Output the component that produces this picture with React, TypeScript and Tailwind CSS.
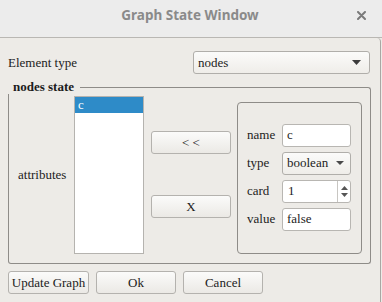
import React from 'react';

const serif = { fontFamily: '"Liberation Serif", "Times New Roman", serif' };

const Btn = ({ label, w }: { label: string; w: string }) => (
  <button
    className={`${w} h-[23px] rounded-[3px] border border-[#b4b2ae] bg-gradient-to-b from-[#fbfbfa] to-[#ebe9e5] text-[13px] text-[#1c1c1c] leading-none`}
  >
    {label}
  </button>
);

const Arrow = ({ small }: { small?: boolean }) =>
  small ? (
    <svg width="8" height="4" viewBox="0 0 8 4">
      <polygon points="0,0 8,0 4,4" fill="#4a4a4a" />
    </svg>
  ) : (
    <svg width="9" height="5" viewBox="0 0 9 5">
      <polygon points="0,0 9,0 4.5,5" fill="#3c3c3c" />
    </svg>
  );

const Combo = ({ value, w, small }: { value: string; w: string; small?: boolean }) => (
  <div
    className={`${w} h-[23px] flex items-center justify-between rounded-[3px] border border-[#b0aeaa] bg-gradient-to-b from-[#fbfbfa] to-[#efede9] pl-[4px] ${small ? 'pr-[6px]' : 'pr-[8px]'} text-[13px] text-[#1c1c1c]`}
  >
    <span>{value}</span>
    <Arrow small={small} />
  </div>
);

const Field = ({ value }: { value: string }) => (
  <div className="w-[69px] h-[23px] flex items-center rounded-[3px] border border-[#b8b6b2] bg-white pl-[4px] text-[13px] text-[#1c1c1c]">
    {value}
  </div>
);

export default function App() {
  return (
    <div className="w-[382px] h-[302px] overflow-hidden bg-[#edebe7]" style={serif}>
      <div className="relative h-[38px] flex items-center justify-center border-b border-[#b9b7b3] bg-[#ececec]">
        <span
          className="text-[13.5px] font-bold text-[#8a8a8a] -mt-[7px] -ml-[2px]"
          style={{ fontFamily: '"Noto Sans", "Open Sans", sans-serif' }}
        >
          Graph State Window
        </span>
        <svg className="absolute right-[16px] top-[11px]" width="9" height="9" viewBox="0 0 9 9">
          <path d="M1 1 L8 8 M8 1 L1 8" stroke="#7a7a7a" strokeWidth="2" strokeLinecap="round" />
        </svg>
      </div>

      <div className="h-[264px] mr-[1px] border-r border-[#a9a7a3] rounded-tr-[4px] px-[8px] pt-[13px] text-[13px] text-[#1c1c1c]">
        <div className="flex items-center justify-between h-[23px] pr-[2px]">
          <span>Element type</span>
          <Combo value="nodes" w="w-[177px]" />
        </div>

        <div className="mt-[6px] w-[363px]">
          <div className="flex h-[14px] items-stretch">
            <span className="pl-[5px] pr-[6px] font-bold leading-[14px]">nodes state</span>
            <div className="flex-1 mt-[7px] border-t border-r border-[#8e8c88] rounded-tr-[3px]" />
          </div>
          <div className="flex items-end h-[170px] border-l border-r border-b border-[#8e8c88] rounded-b-[3px] pl-[9px] pb-[9px]">
            <div className="flex items-center self-start mt-[2px]">
              <span className="w-[56px]">attributes</span>
              <div className="w-[70px] h-[158px] border border-[#b5b3af] bg-white">
                <div className="h-[16px] bg-[#2e8bc8] text-white pl-[3px] leading-[16px]">c</div>
              </div>
            </div>
            <div className="flex flex-col self-start ml-[7px] mt-[37px] gap-[41px]">
              <Btn label="< <" w="w-[80px]" />
              <Btn label="X" w="w-[80px]" />
            </div>
            <div className="ml-[6px] w-[125px] h-[152px] rounded-[4px] border border-[#8e8c88] flex flex-col justify-center gap-[5px] pl-[9px] pb-[2px]">
              <div className="flex items-center">
                <span className="w-[35px]">name</span>
                <Field value="c" />
              </div>
              <div className="flex items-center">
                <span className="w-[35px]">type</span>
                <Combo value="boolean" w="w-[69px]" small />
              </div>
              <div className="flex items-center">
                <span className="w-[35px]">card</span>
                <div className="w-[69px] h-[23px] flex items-center rounded-[3px] border border-[#b8b6b2] bg-white pl-[5px]">
                  <span className="flex-1">1</span>
                  <div className="w-[13px] h-full border-l border-[#c8c6c2] flex flex-col items-center justify-center gap-[3px]">
                    <svg width="7" height="4" viewBox="0 0 7 4">
                      <polygon points="0,4 7,4 3.5,0" fill="#555" />
                    </svg>
                    <svg width="7" height="4" viewBox="0 0 7 4">
                      <polygon points="0,0 7,0 3.5,4" fill="#555" />
                    </svg>
                  </div>
                </div>
              </div>
              <div className="flex items-center">
                <span className="w-[35px]">value</span>
                <Field value="false" />
              </div>
            </div>
          </div>
        </div>

        <div className="flex gap-[7px] mt-[7px]">
          <Btn label="Update Graph" w="w-[81px]" />
          <Btn label="Ok" w="w-[80px]" />
          <Btn label="Cancel" w="w-[80px]" />
        </div>
      </div>
    </div>
  );
}
